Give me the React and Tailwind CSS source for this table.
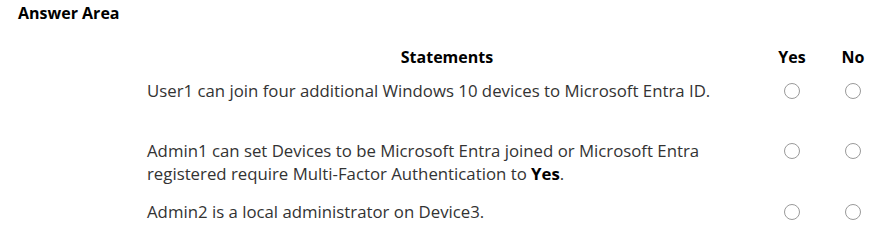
export default function App() {
  const rows = [
    { id: 1, text: <>User1 can join four additional Windows 10 devices to Microsoft Entra ID.</>, pad: 'pb-[37px]' },
    {
      id: 2,
      text: (
        <>
          Admin1 can set Devices to be Microsoft Entra joined or Microsoft Entra
          <br />
          registered require Multi-Factor Authentication to <b className="font-bold text-black">Yes</b>.
        </>
      ),
      pad: 'pb-[15px]',
    },
    { id: 3, text: <>Admin2 is a local administrator on Device3.</>, pad: '' },
  ];

  return (
    <div className="w-[892px] h-[247px] bg-white text-[#333] font-['Open_Sans',sans-serif] overflow-hidden">
      <div className="pl-[18px] pt-[3px] text-[16px] font-bold text-black leading-[20px]">Answer Area</div>
      <div className="pl-[147px] pt-[23px]">
        <div className="grid grid-cols-[614px_62px_60px] items-start text-[16.8px] leading-[23px]">
          <div className="pr-[14px] text-center text-[16px] font-bold text-black pb-[10px]">Statements</div>
          <div className="text-center text-[16px] font-bold text-black">Yes</div>
          <div className="text-center text-[16px] font-bold text-black">No</div>
          {rows.map((r) => (
            <Row key={r.id} text={r.text} pad={r.pad} />
          ))}
        </div>
      </div>
    </div>
  );
}

function Row({ text, pad }) {
  return (
    <>
      <div className={pad}>{text}</div>
      <div className="flex justify-center h-[23px] items-center">
        <Radio />
      </div>
      <div className="flex justify-center h-[23px] items-center">
        <Radio />
      </div>
    </>
  );
}

function Radio() {
  return <span className="block w-[16px] h-[16px] rounded-full border-[1.5px] border-[#9a9a9a] bg-white" />;
}
